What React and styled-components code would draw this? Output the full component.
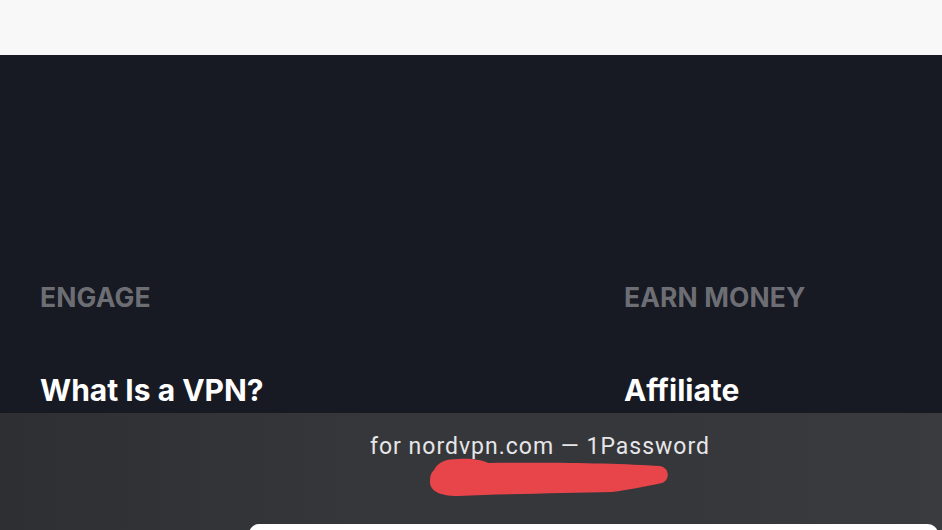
import styled, { createGlobalStyle } from "styled-components";

const GlobalStyle = createGlobalStyle`
  html, body {
    margin: 0;
    padding: 0;
    width: 942px;
    height: 530px;
    overflow: hidden;
    background: #171923;
  }
`;

const Page = styled.div`
  position: relative;
  width: 942px;
  height: 530px;
  overflow: hidden;
  display: flex;
  flex-direction: column;
  font-family: Inter, "Liberation Sans", sans-serif;
`;

const TopBar = styled.header`
  height: 55px;
  flex: none;
  background: #f8f8f8;
`;

const Footer = styled.footer`
  flex: 1;
  background: #171923;
  display: grid;
  grid-template-columns: 584px 1fr;
  padding: 227px 0 0 40px;
`;

const Column = styled.div`
  display: flex;
  flex-direction: column;
`;

const ColumnTitle = styled.h4`
  margin: 0;
  font-size: 26.5px;
  font-weight: 700;
  line-height: 30px;
  letter-spacing: 0.1px;
  color: #6c6e73;
  text-transform: uppercase;
`;

const ColumnLink = styled.a`
  margin-top: 61px;
  font-size: 30px;
  font-weight: 700;
  line-height: 34px;
  color: #ffffff;
  text-decoration: none;
`;

const Sheet = styled.div`
  position: absolute;
  left: 0;
  right: 0;
  top: 413px;
  bottom: 0;
  background: linear-gradient(90deg, #2e2f33 0%, #36373b 40%, #36373b 70%, #3a3b3f 100%);
  display: flex;
  flex-direction: column;
  align-items: center;
`;

const SheetTitle = styled.div`
  margin: 20px 0 0 138px;
  font-family: Roboto, "Liberation Sans", sans-serif;
  font-size: 23px;
  line-height: 28px;
  color: #e6e6e8;
  letter-spacing: 1px;
`;

const Scribble = styled.svg`
  margin: -3px 0 0 158px;
  display: block;
`;

const Card = styled.div`
  position: absolute;
  left: 249px;
  right: 4px;
  top: 524px;
  height: 40px;
  background: #ffffff;
  border-radius: 10px;
`;

export default function App() {
  return (
    <Page>
      <GlobalStyle />
      <TopBar />
      <Footer>
        <Column>
          <ColumnTitle>Engage</ColumnTitle>
          <ColumnLink href="#">What Is a VPN?</ColumnLink>
        </Column>
        <Column>
          <ColumnTitle>Earn Money</ColumnTitle>
          <ColumnLink href="#">Affiliate</ColumnLink>
        </Column>
      </Footer>
      <Sheet>
        <SheetTitle>for nordvpn.com — 1Password</SheetTitle>
        <Scribble width="244" height="40" viewBox="0 0 244 40">
          <path
            d="M6 12 C10 4 18 1 30 1 C44 0 54 2 60 5 C120 4 190 5 232 8 C242 10 242 22 234 25 C215 29 200 32 184 34 C140 35 80 36 30 38 C10 38 2 32 2 24 C2 18 3 15 6 12 Z"
            fill="#e8454b"
          />
        </Scribble>
      </Sheet>
      <Card />
    </Page>
  );
}
